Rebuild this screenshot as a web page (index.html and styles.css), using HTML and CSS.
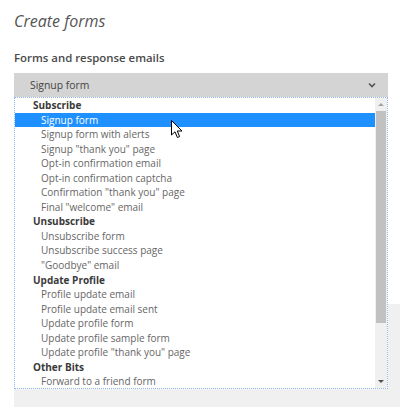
FILE: index.html
```html
<!DOCTYPE html>
<html>
<head>
<meta charset="utf-8">
<link rel="stylesheet" href="styles.css">
</head>
<body>
<div class="page">
  <h1 class="title">Create forms</h1>
  <div class="label">Forms and response emails</div>
  <div class="select-wrap">
    <div class="select">
      <span class="select-value">Signup form</span>
      <svg class="chevron" width="8" height="6" viewBox="0 0 8 6"><path d="M1 1.5 L4 4.5 L7 1.5" fill="none" stroke="#555" stroke-width="1.6"/></svg>
    </div>
    <div class="dropdown">
      <ul class="list">
        <li class="group">Subscribe</li>
        <li class="item selected">Signup form</li>
        <li class="item">Signup form with alerts</li>
        <li class="item">Signup "thank you" page</li>
        <li class="item">Opt-in confirmation email</li>
        <li class="item">Opt-in confirmation captcha</li>
        <li class="item">Confirmation "thank you" page</li>
        <li class="item">Final "welcome" email</li>
        <li class="group">Unsubscribe</li>
        <li class="item">Unsubscribe form</li>
        <li class="item">Unsubscribe success page</li>
        <li class="item">"Goodbye" email</li>
        <li class="group">Update Profile</li>
        <li class="item">Profile update email</li>
        <li class="item">Profile update email sent</li>
        <li class="item">Update profile form</li>
        <li class="item">Update profile sample form</li>
        <li class="item">Update profile "thank you" page</li>
        <li class="group">Other Bits</li>
        <li class="item">Forward to a friend form</li>
      </ul>
      <div class="scrollbar">
        <div class="arrow up"></div>
        <div class="track"><div class="thumb"></div></div>
        <div class="arrow down"></div>
      </div>
    </div>
    <svg class="cursor" width="12" height="19" viewBox="0 0 12 19"><path d="M0.5 0.5 L0.5 15 L4 11.8 L6.4 17.5 L8.6 16.6 L6.3 11 L11 11 Z" fill="#fff" stroke="#000" stroke-width="1" stroke-linejoin="round"/></svg>
  </div>
  <div class="panel"></div>
</div>
</body>
</html>
```
FILE: styles.css
```css
html, body {
  margin: 0;
  padding: 0;
  background: #fff;
  overflow: hidden;
}
body {
  font-family: "Open Sans", "Liberation Sans", sans-serif;
  color: #444;
}
.page {
  padding: 8px 12px 0 14px;
}
.title {
  margin: 0;
  font-size: 16px;
  font-style: italic;
  font-weight: 400;
  line-height: 26px;
  color: #555;
}
.label {
  margin-top: 16px;
  font-size: 11.4px;
  font-weight: 600;
  line-height: 16px;
  color: #4a4a4a;
}
.select-wrap {
  position: relative;
  margin-top: 7px;
}
.select {
  height: 24px;
  background: #d4d4d4;
  display: flex;
  align-items: center;
  justify-content: space-between;
  padding: 0 12px 0 16px;
  font-size: 10.4px;
  color: #444;
}
.chevron {
  display: block;
}
.dropdown {
  position: absolute;
  top: 24px;
  left: 0;
  right: 0;
  height: 290px;
  border: 1px dotted #8fb6ea;
  background: #fff;
  display: flex;
  z-index: 2;
}
.list {
  list-style: none;
  margin: 0;
  padding: 0;
  flex: 1;
  font-size: 10px;
}
.list li {
  height: 14.55px;
  line-height: 14.55px;
  white-space: nowrap;
}
.group {
  padding-left: 18px;
  font-weight: 700;
  color: #3a3a3a;
}
.item {
  padding-left: 26px;
  color: #666;
}
.item.selected {
  background: #1e90ff;
  color: #fff;
}
.scrollbar {
  width: 12px;
  background: #f0f0f0;
  display: flex;
  flex-direction: column;
}
.arrow {
  height: 13px;
  display: flex;
  align-items: center;
  justify-content: center;
}
.arrow.up::before {
  content: "";
  border-left: 3.5px solid transparent;
  border-right: 3.5px solid transparent;
  border-bottom: 3.5px solid #a3a3a3;
}
.arrow.down::before {
  content: "";
  border-left: 3.5px solid transparent;
  border-right: 3.5px solid transparent;
  border-top: 3.5px solid #505050;
}
.track {
  flex: 1;
  padding: 0 1px;
}
.thumb {
  height: 212px;
  background: #c1c1c1;
}
.cursor {
  position: absolute;
  left: 157px;
  top: 47px;
  z-index: 3;
}
.panel {
  margin-top: 207px;
  margin-right: -12px;
  height: 120px;
  background: #f0f0f0;
}
```
